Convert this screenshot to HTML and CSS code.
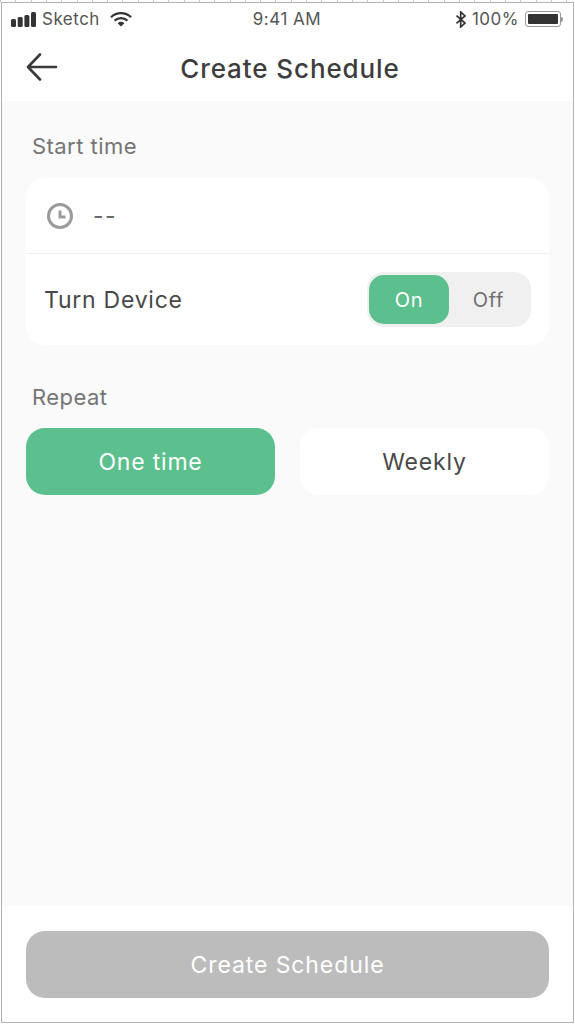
FILE: index.html
```html
<!DOCTYPE html>
<html lang="en">

<head>
    <meta charset="UTF-8">
    <meta name="viewport" content="width=device-width, initial-scale=1.0">
    <title>Create Schedule</title>
    <link rel="stylesheet" href="styles.css">
</head>

<body>
    <div class="ruler"></div>
    <div class="phone">
        <div class="top">
            <div class="status">
                <div class="status-left">
                    <svg class="signal" width="25" height="15" viewBox="0 0 25 15">
                        <rect x="0" y="7" width="5" height="8" rx="1.500" />
                        <rect x="6.700" y="5" width="5" height="10" rx="1.500" />
                        <rect x="13.400" y="3" width="5" height="12" rx="1.500" />
                        <rect x="20" y="0" width="5" height="15" rx="1.500" />
                    </svg>
                    <span>Sketch</span>
                    <svg class="wifi" width="22" height="15" viewBox="0 0 22 15">
                        <path d="M1 5.200a14.500 14.500 0 0 1 20 0" />
                        <path d="M4.600 8.600a9.300 9.300 0 0 1 12.800 0" />
                        <path class="dot" d="M11 14.600l-3.300-3.400a4.700 4.700 0 0 1 6.600 0z" />
                    </svg>
                </div>
                <div class="status-time">9:41 AM</div>
                <div class="status-right">
                    <svg class="bt" width="12" height="17" viewBox="0 0 12 17">
                        <path d="M1.500 4.700l8.500 7.300-4.300 4V1l4.300 4-8.500 7.300" />
                    </svg>
                    <span>100%</span>
                    <div class="battery"><div class="battery-fill"></div></div>
                    <div class="battery-tip"></div>
                </div>
            </div>
            <div class="nav">
                <svg class="back" width="32" height="28" viewBox="0 0 32 28">
                    <path d="M2 14h28M14 1.500L2 14l12 12.500" />
                </svg>
                <h1>Create Schedule</h1>
            </div>
        </div>

        <div class="content">
            <div class="label">Start time</div>
            <div class="card">
                <div class="row time-row">
                    <svg class="clock" width="28" height="28" viewBox="0 0 28 28">
                        <circle cx="14" cy="14" r="11.500" />
                        <path d="M14 8.500V15h5.500" />
                    </svg>
                    <span class="dashes">--</span>
                </div>
                <div class="row device-row">
                    <span>Turn Device</span>
                    <div class="toggle">
                        <div class="toggle-on">On</div>
                        <div class="toggle-off">Off</div>
                    </div>
                </div>
            </div>

            <div class="label repeat">Repeat</div>
            <div class="choices">
                <div class="choice selected">One time</div>
                <div class="choice">Weekly</div>
            </div>
        </div>

        <div class="bottom">
            <div class="create">Create Schedule</div>
        </div>
    </div>
</body>

</html>
```

FILE: styles.css
```css
html, body {
    height: 100%;
    margin: 0;
    background-color: #ffffff;
    font-family: Inter, "Noto Sans", sans-serif;
    overflow: hidden;
}

.ruler {
    height: 2px;
    background-image: repeating-linear-gradient(90deg, #c9c4c6 0, #c9c4c6 1px, #ffffff 1px, #ffffff 15.300px);
}

.phone {
    height: 1021px;
    box-sizing: border-box;
    margin: 0 1px;
    display: flex;
    flex-direction: column;
    border: 1px solid #b5b0b2;
    background-color: #fafafa;
}

.top {
    height: 98px;
    flex-shrink: 0;
    background-color: #ffffff;
}

.status {
    height: 32px;
    display: grid;
    grid-template-columns: 1fr auto 1fr;
    align-items: center;
    padding: 0 10px 0 9px;
    font-size: 17px;
    letter-spacing: 0.5px;
    color: #555555;
}

.status-left, .status-right {
    display: flex;
    align-items: center;
}

.status-right {
    justify-content: flex-end;
}

.signal {
    fill: #333333;
}

.status-left span {
    margin-left: 6px;
}

.wifi {
    margin-left: 10px;
    fill: none;
    stroke: #333333;
    stroke-width: 2.200;
}

.wifi .dot {
    fill: #333333;
    stroke: none;
}

.bt {
    fill: none;
    stroke: #333333;
    stroke-width: 1.700;
}

.status-right span {
    margin-left: 5px;
}

.battery {
    width: 36px;
    height: 16px;
    margin-left: 6px;
    padding: 2px;
    box-sizing: border-box;
    border: 1px solid #999999;
    border-radius: 3px;
}

.battery-fill {
    height: 100%;
    background-color: #333333;
    border-radius: 1px;
}

.battery-tip {
    width: 2px;
    height: 5px;
    background-color: #999999;
    border-radius: 0 2px 2px 0;
}

.nav {
    height: 66px;
    display: flex;
    align-items: center;
    justify-content: center;
    padding-left: 5px;
    position: relative;
}

.nav h1 {
    margin: 0;
    font-size: 26px;
    font-weight: 500;
    letter-spacing: 0.9px;
    color: #3d3d3d;
}

.back {
    position: absolute;
    left: 24px;
    top: 18px;
    fill: none;
    stroke: #3a3a3a;
    stroke-width: 2.600;
    stroke-linecap: round;
    stroke-linejoin: round;
}

.content {
    flex: 1;
    padding: 0 24px;
}

.label {
    margin: 30px 0 0 6px;
    height: 30px;
    line-height: 30px;
    font-size: 22px;
    letter-spacing: 0.45px;
    color: #757575;
}

.card {
    margin-top: 17px;
    background-color: #ffffff;
    border-radius: 19px;
}

.row {
    display: flex;
    align-items: center;
    font-size: 23px;
    letter-spacing: 0.75px;
    color: #484848;
}

.time-row {
    height: 75px;
    padding-left: 20px;
    border-bottom: 1px solid #f0f0f0;
}

.clock {
    fill: none;
    stroke: #9b9b9b;
    stroke-width: 3;
}

.dashes {
    margin-left: 19px;
    letter-spacing: 1.500px;
    color: #666666;
}

.device-row {
    height: 91px;
    padding: 0 18px;
    justify-content: space-between;
}

.toggle {
    width: 164px;
    height: 55px;
    box-sizing: border-box;
    padding: 3px 3px 3px 2px;
    display: flex;
    background-color: #f0f0f0;
    border-radius: 17px;
    font-size: 20px;
}

.toggle-on, .toggle-off {
    display: flex;
    align-items: center;
    justify-content: center;
    width: 80px;
}

.toggle-on {
    color: #ffffff;
    background-color: #5bc08e;
    border-radius: 15px;
}

.toggle-off {
    flex: 1;
    color: #707070;
}

.repeat {
    margin-top: 37px;
}

.choices {
    margin-top: 16px;
    display: grid;
    grid-template-columns: 1fr 1fr;
    gap: 25px;
}

.choice {
    height: 67px;
    display: flex;
    align-items: center;
    justify-content: center;
    background-color: #ffffff;
    border-radius: 19px;
    font-size: 23px;
    letter-spacing: 0.8px;
    color: #484848;
}

.choice.selected {
    background-color: #5bc08e;
    color: #ffffff;
}

.bottom {
    height: 116px;
    flex-shrink: 0;
    padding: 25px 24px 0;
    box-sizing: border-box;
    background-color: #ffffff;
}

.create {
    height: 67px;
    display: flex;
    align-items: center;
    justify-content: center;
    background-color: #bcbcbc;
    border-radius: 19px;
    font-size: 23px;
    letter-spacing: 0.9px;
    color: #ffffff;
}
```
